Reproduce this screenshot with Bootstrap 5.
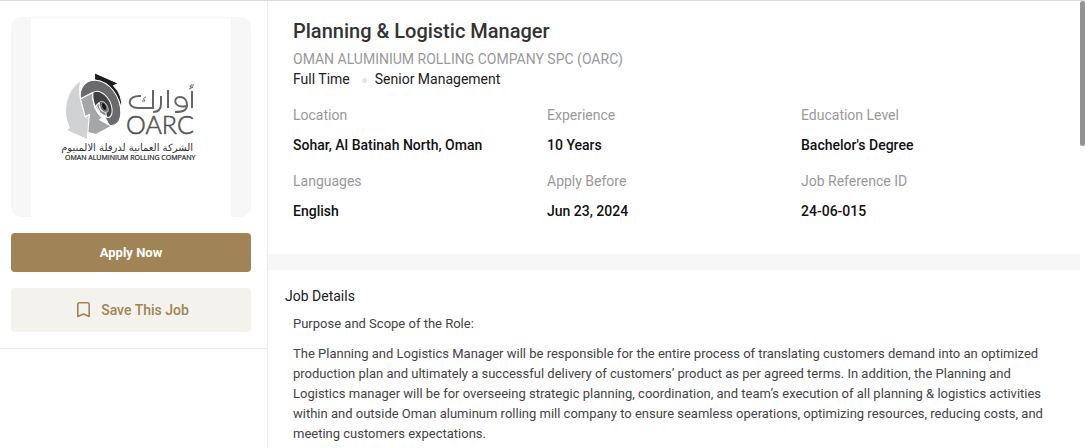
<!DOCTYPE html>
<html lang="en">
<head>
<meta charset="utf-8">
<meta name="viewport" content="width=device-width, initial-scale=1">
<title>Planning &amp; Logistic Manager</title>
<link href="https://cdn.jsdelivr.net/npm/bootstrap@5.3.0/dist/css/bootstrap.min.css" rel="stylesheet">
<style>
  body { font-family: Roboto, "Liberation Sans", sans-serif; font-size: 14px; line-height: 20px; color: #212121; background: #fff; }
  .page-shell { height: 100vh; border-top: 1px solid #d9d9d9; }
  .side-panel { width: 268px; border-right: 1px solid #ebebeb; }
  .side-inner { padding: 16px 16px 16px 11px; border-bottom: 1px solid #ebebeb; }
  .logo-frame { background: #f7f7f7; border-radius: 10px; }
  .logo-frame svg { display: block; background: #fff; margin: 1px 0 0; }
  .btn-apply, .btn-save { border: 0; border-radius: 4px; font-weight: 500; }
  .btn-apply { --bs-btn-hover-bg: #8e764a; background: #a08456; color: #fff; font-size: 13px; line-height: 19px; padding: 10px; font-weight: 700; }
  .btn-save { background: #f4f2ec; color: #a08456; font-size: 14px; line-height: 20px; padding: 12px; }
  .job-head { padding: 16px 25px 17px; border-bottom: 16px solid #f7f7f7; }
  .job-title { font-size: 20px; line-height: 28px; font-weight: 500; color: #333; }
  .company-name { color: #999; line-height: 20px; margin-top: 4px; }
  .job-tags { line-height: 20px; }
  .tag-dot { width: 5px; height: 5px; margin: 3px 8px 0 12px; background: #e6e6e6; }
  .facts { margin-top: 16px; }
  .facts dt { font-weight: 400; color: #999; }
  .facts dd { font-weight: 500; color: #111; margin: 10px 0 16px; }
  .job-body { padding: 16px 17px; }
  .job-body h2 { font-size: 14px; line-height: 20px; font-weight: 400; margin: 0 0 8px; }
  .job-copy { padding: 0 8px; font-size: 13px; color: #444; }
  .job-copy p { margin: 0 0 10px; }
  .scroll-track { width: 5px; }
  .scroll-thumb { height: 145px; background: #929292; border-radius: 3px; }
</style>
</head>
<body>
<div class="page-shell d-flex overflow-hidden">
  <aside class="side-panel flex-shrink-0">
    <div class="side-inner d-flex flex-column gap-3">
      <div class="logo-frame d-flex justify-content-center overflow-hidden">
        <svg width="200" height="199" viewBox="0 0 200 199" role="img" aria-label="OARC, Oman Aluminium Rolling Company">
          <g transform="translate(28 46) scale(.345 .34)" stroke="#fff" stroke-width="3" stroke-linejoin="round">
            <path fill="#1e1c1d" d="M103 26 172 57 158 64C176 82 184 104 182 132 167 86 145 56 103 46Z"/>
            <path fill="#6b6b6d" d="M62 103C58 70 76 47 105 48 145 50 179 94 179 143 179 169 166 185 145 180L98 84Z"/>
            <path fill="#a5a6a8" d="M62 103 98 84C96 118 105 141 125 158L118 164 152 183 107 207 80 200 88 148 76 156Z"/>
            <path fill="#d1d2d4" d="M64 48C59 66 59 85 62 103L76 156 88 148 82 222 20 195 30 188C8 140 18 78 64 48Z"/>
            <path fill="#414042" d="M98 84C117 70 151 98 154 135 155 151 147 161 138 156L120 144C104 132 96 108 98 84Z"/>
            <path fill="#8b8c8e" d="M108 122 117 113C114 130 124 142 135 140L138 156 120 145Z"/>
            <path fill="#5b5b5d" stroke-width="2" d="M117 113C128 101 146 124 142 140 129 147 117 132 117 113Z"/>
            <path fill="#151314" stroke-width="1" d="M123 115C132 110 142 128 137 136 128 138 123 128 123 115Z"/>
          </g>
          <g fill="none" stroke="#666" stroke-width="2" stroke-linecap="butt">
            <path d="M110 78c-14-1-15 12-3 12h15V72"/>
            <path d="M115 79q-4 1-1 4h-3" stroke-width="1"/>
            <path d="M130 78v8q0 8-8 8"/>
            <path d="M137 72v18"/>
            <path d="M155 88c-12 3-14-9-6-9 5 0 7 4 7 8 0 6-5 7-12 7"/>
            <path d="M161 73v17"/>
            <path d="M163 67q-4-1-4 2h3l-4 2" stroke-width="1"/>
          </g>
          <g font-family="Lato, sans-serif">
            <text x="95" y="116" font-size="25" font-weight="300" fill="#555" stroke="#555" stroke-width=".6">OARC</text>
            <text x="162" y="133" font-family="DejaVu Sans, sans-serif" font-size="10" fill="#333" direction="rtl">الشركة العمانية لدرفلة الالمنيوم</text>
            <text x="34" y="142" font-size="7" fill="#222" stroke="#222" stroke-width=".2" font-family="Open Sans, sans-serif">OMAN ALUMINIUM ROLLING COMPANY</text>
          </g>
        </svg>
      </div>
      <button type="button" class="btn btn-apply w-100">Apply Now</button>
      <button type="button" class="btn btn-save w-100 d-flex align-items-center justify-content-center">
        <svg class="me-2" width="20" height="20" viewBox="0 0 20 20" fill="none" stroke="currentColor" stroke-width="1.6" stroke-linejoin="round" aria-hidden="true"><path d="M4.800 16.500V4.500Q4.800 2.800 6.500 2.800H14.500Q16.200 2.800 16.200 4.500V16.500L10.500 14Z"/></svg>
        <span>Save This Job</span>
      </button>
    </div>
  </aside>

  <main class="flex-grow-1">
    <header class="job-head">
      <h1 class="job-title mb-0">Planning &amp; Logistic Manager</h1>
      <div class="company-name">OMAN ALUMINIUM ROLLING COMPANY SPC (OARC)</div>
      <div class="job-tags d-flex align-items-center">
        <span>Full Time</span>
        <span class="tag-dot rounded-circle"></span>
        <span>Senior Management</span>
      </div>
      <dl class="facts row row-cols-3 gx-0 mb-0">
        <div class="col"><dt>Location</dt><dd>Sohar, Al Batinah North, Oman</dd></div>
        <div class="col"><dt>Experience</dt><dd>10 Years</dd></div>
        <div class="col"><dt>Education Level</dt><dd>Bachelor's Degree</dd></div>
        <div class="col"><dt>Languages</dt><dd>English</dd></div>
        <div class="col"><dt>Apply Before</dt><dd>Jun 23, 2024</dd></div>
        <div class="col"><dt>Job Reference ID</dt><dd>24-06-015</dd></div>
      </dl>
    </header>
    <section class="job-body">
      <h2>Job Details</h2>
      <div class="job-copy">
        <p>Purpose and Scope of the Role:</p>
        <p>The Planning and Logistics Manager will be responsible for the entire process of translating customers demand into an optimized production plan and ultimately a successful delivery of customers’ product as per agreed terms. In addition, the Planning and Logistics manager will be for overseeing strategic planning, coordination, and team’s execution of all planning &amp; logistics activities within and outside Oman aluminum rolling mill company to ensure seamless operations, optimizing resources, reducing costs, and meeting customers expectations.</p>
      </div>
    </section>
  </main>
  <div class="scroll-track flex-shrink-0" aria-hidden="true"><div class="scroll-thumb"></div></div>
</div>
<script src="https://cdn.jsdelivr.net/npm/bootstrap@5.3.0/dist/js/bootstrap.bundle.min.js"></script>
</body>
</html>
